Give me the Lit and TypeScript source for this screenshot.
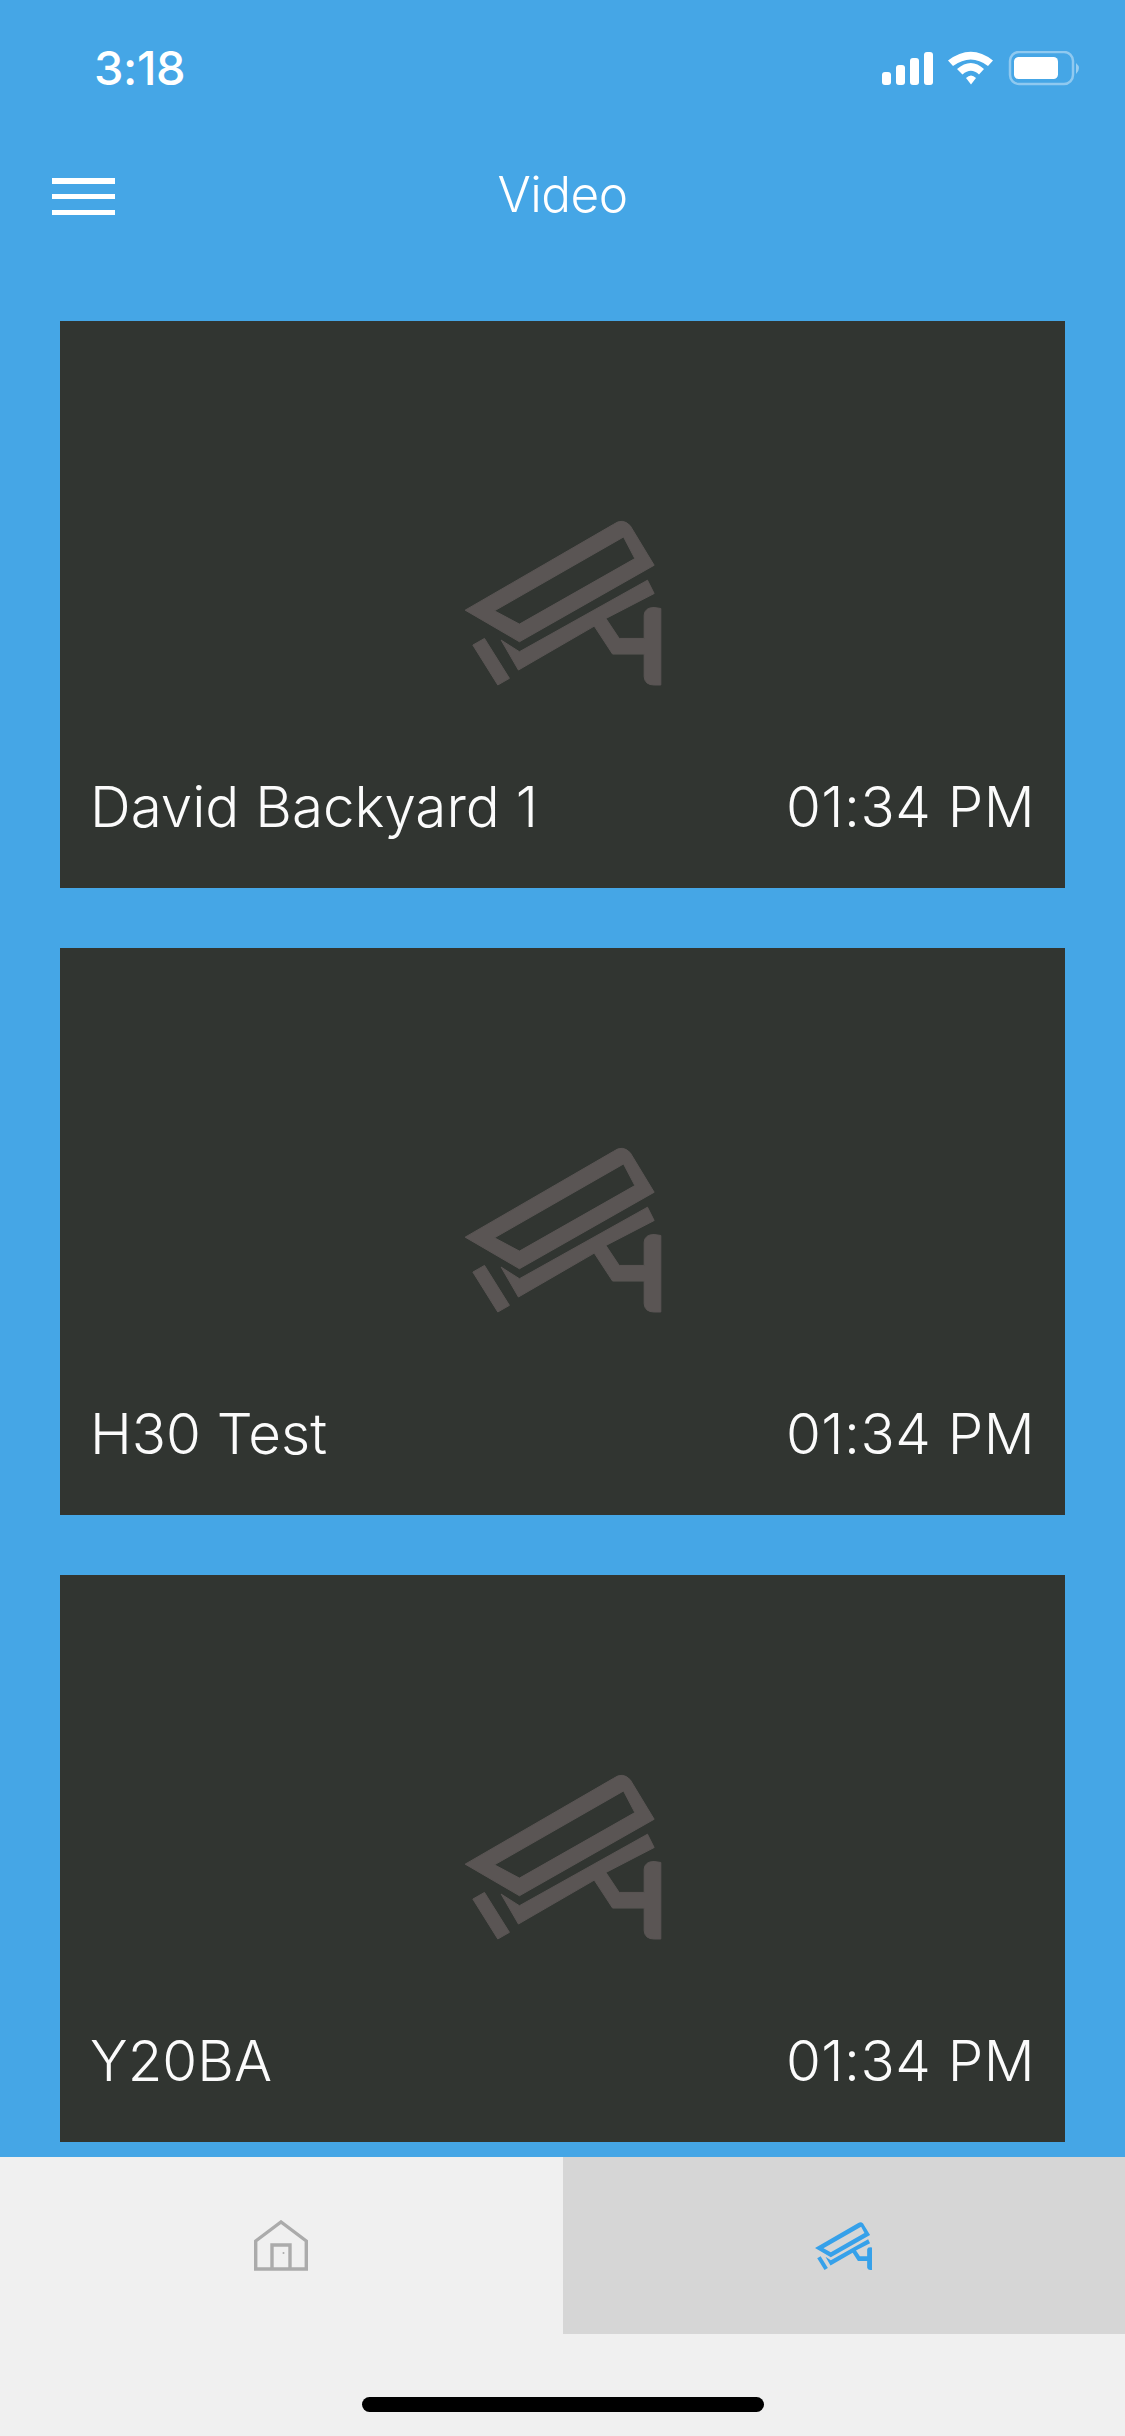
import { LitElement, html, css, svg } from "lit";
import { customElement } from "lit/decorators.js";

const camera = svg`<path fill-rule="evenodd" d="M72 330 L518 72 Q545 52 568 76 L640 195 L235 425 Z M160 332 L235 372 L582 175 L548 110 Z"/><path d="M180 420 L235 455 L620 240 L640 280 L495 355 L535 415 L610 415 L610 345 Q612 322 640 322 L660 325 L660 555 L640 555 Q612 555 610 530 L610 462 L515 462 L460 378 L232 510 Z"/><path d="M95 435 L130 415 L205 535 L170 555 Z"/>`;

@customElement("app-root")
export class AppRoot extends LitElement {
  static styles = css`
    :host { display: block; width: 1125px; height: 2436px; overflow: hidden; font-family: Inter, "Liberation Sans", sans-serif; }
    .page { height: 2436px; display: flex; flex-direction: column; background: #45a6e6; color: #fff; }
    .status { height: 137px; box-sizing: border-box; padding: 44px 43px 0 94px; display: flex; justify-content: space-between; align-items: flex-start; }
    .clock { font-size: 47px; font-weight: 500; line-height: 48px; letter-spacing: -0.4px; }
    .sys { display: block; margin-top: 7px; }
    .nav { height: 120px; position: relative; display: flex; align-items: center; justify-content: center; padding-bottom: 6px; box-sizing: border-box; }
    .title { font-size: 49.5px; font-weight: 300; line-height: 60px; letter-spacing: -0.5px; }
    .burger { position: absolute; left: 52px; top: 41px; width: 63px; height: 37px; display: flex; flex-direction: column; justify-content: space-between; }
    .burger i { display: block; height: 5.5px; background: #fff; }
    .list { flex: 1; min-height: 0; padding: 64px 60px 0; display: flex; flex-direction: column; gap: 60px; overflow: hidden; }
    .card { height: 567px; flex: none; background: #313531; display: grid; }
    .card > * { grid-area: 1 / 1; }
    .cam { place-self: center; width: 196px; height: 164px; margin-bottom: 3px; fill: #5a5554; stroke: #5a5554; stroke-width: 3; overflow: visible; }
    .caption { align-self: end; display: flex; justify-content: space-between; padding: 0 30px 48px; font-size: 56.5px; font-weight: 350; line-height: 66px; color: #fbfbfb; }
    .when { letter-spacing: 0.5px; }
    .tabs { flex: none; height: 279px; background: #f0f0f0; display: flex; flex-direction: column; }
    .tabrow { height: 177px; display: grid; grid-template-columns: 1fr 1fr; }
    .tab { display: flex; align-items: center; justify-content: center; }
    .tab.active { background: #d6d6d6; }
    .home { width: 54px; height: 51px; fill: none; stroke: #ababab; stroke-width: 3.4; }
    .tabcam { width: 57px; height: 48px; fill: #36a1ea; }
    .indicator { width: 402px; height: 15px; border-radius: 8px; background: #000; margin: 63px auto 0; }
  `;

  private card(name: string) {
    return html`<div class="card">
      <svg class="cam" viewBox="72 62 588 493">${camera}</svg>
      <div class="caption"><span>${name}</span><span class="when">01:34 PM</span></div>
    </div>`;
  }

  render() {
    return html`<div class="page">
      <div class="status">
        <span class="clock">3:18</span>
        <svg class="sys" width="200" height="36" viewBox="0 0 200 36" fill="#fff">
          <rect x="0" y="21" width="9" height="13" rx="3"/>
          <rect x="14" y="14" width="9" height="20" rx="3"/>
          <rect x="28" y="7" width="9" height="27" rx="3"/>
          <rect x="42" y="1" width="9" height="33" rx="3"/>
          <path d="M66 9.5 Q89 -8 111 9.5 L106 15 Q89 2 71 15 Z"/>
          <path d="M75 18 Q89 6 102 18 L97 23.5 Q89 16 80.5 23.5 Z"/>
          <path d="M84 27 Q89 22 94 27 L89 33.5 Z"/>
          <rect x="128" y="1" width="63" height="32" rx="9" fill="none" stroke="#fff" stroke-opacity=".4" stroke-width="2.5"/>
          <rect x="132" y="6" width="44" height="22" rx="4.5"/>
          <path d="M194 12 Q200 17 194 23 Z" fill-opacity=".45"/>
        </svg>
      </div>
      <div class="nav">
        <div class="burger"><i></i><i></i><i></i></div>
        <span class="title">Video</span>
      </div>
      <div class="list">
        ${this.card("David Backyard 1")}
        ${this.card("H30 Test")}
        ${this.card("Y20BA")}
      </div>
      <div class="tabs">
        <div class="tabrow">
          <div class="tab">
            <svg class="home" viewBox="0 0 54 51">
              <path d="M1.7 21 L27 2 L52.3 21 V49 H1.7 Z"/>
              <path d="M18 49 V25 H36 V49"/>
              <circle cx="29.5" cy="33" r="1" fill="#ababab" stroke="none"/>
            </svg>
          </div>
          <div class="tab active">
            <svg class="tabcam" viewBox="72 62 588 493">${camera}</svg>
          </div>
        </div>
        <div class="indicator"></div>
      </div>
    </div>`;
  }
}
